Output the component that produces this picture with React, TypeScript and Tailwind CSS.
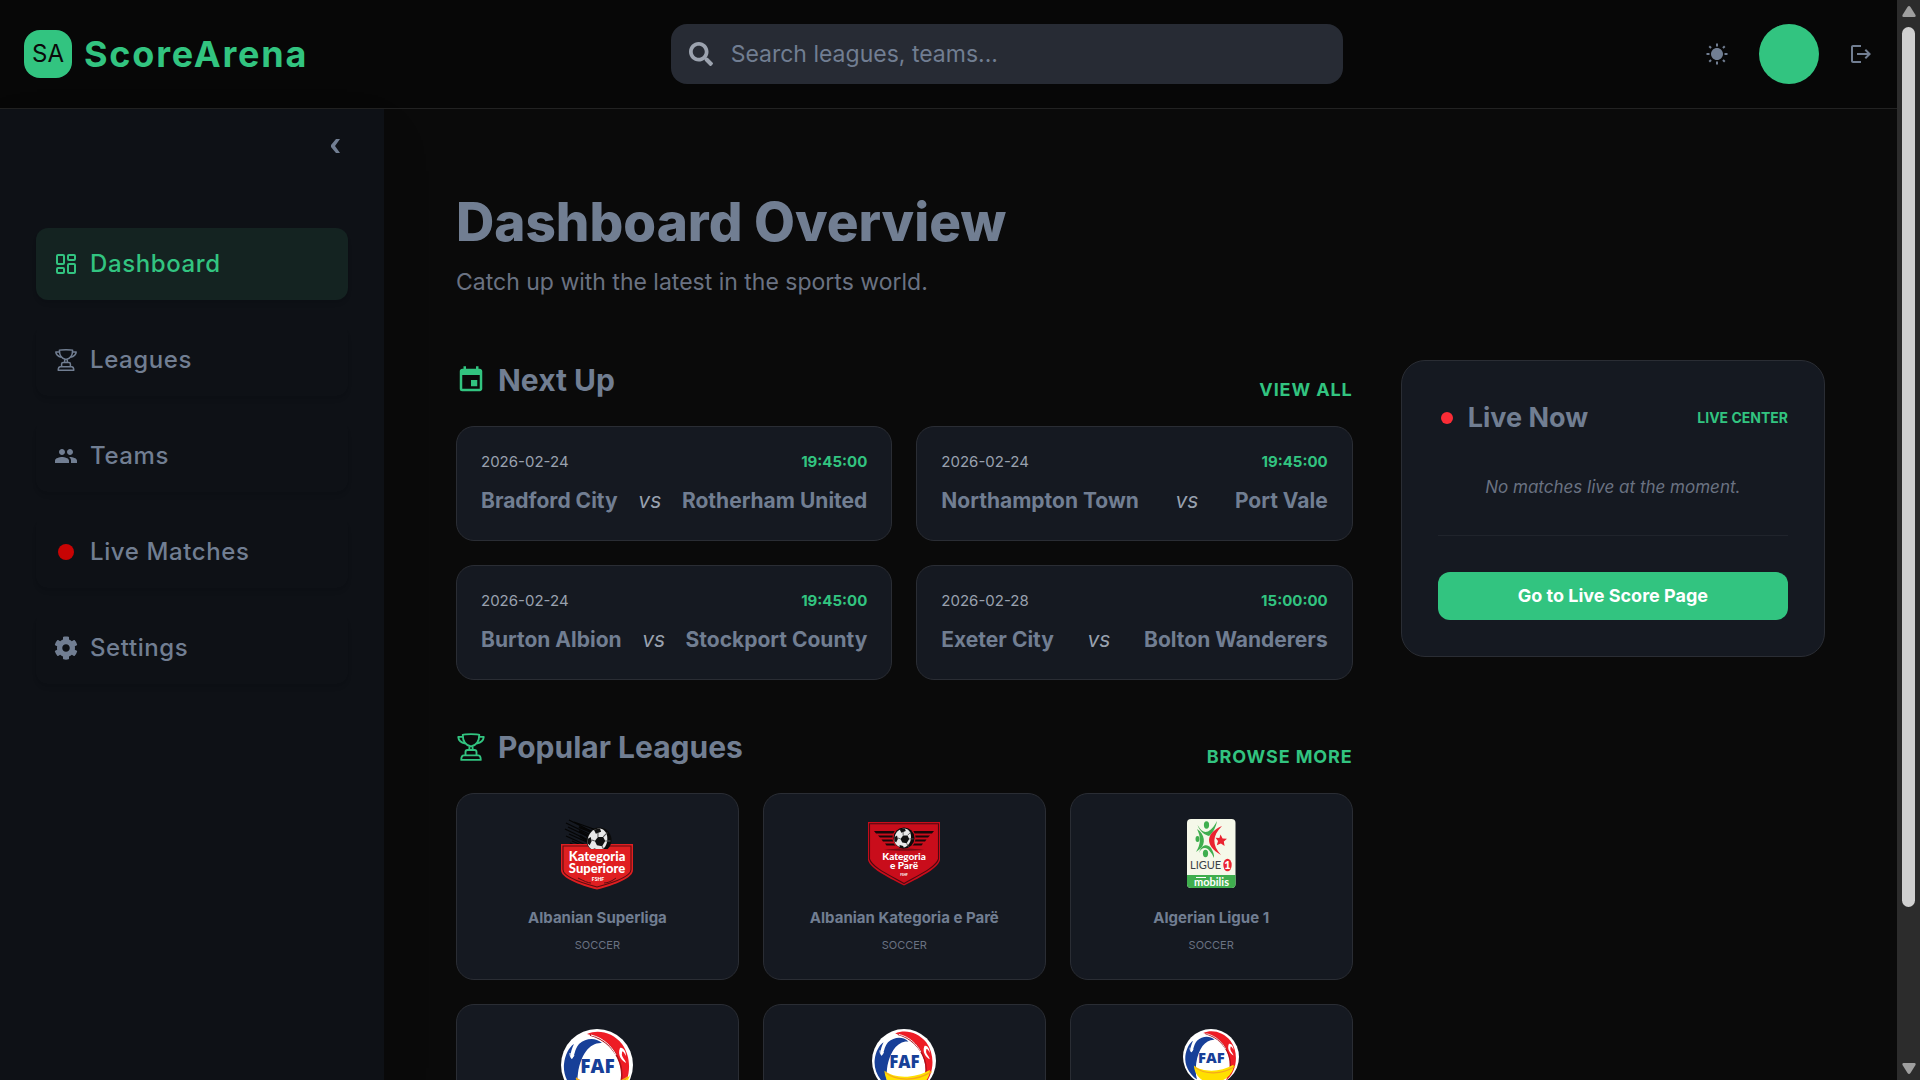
import type { ReactNode } from "react";
import clsx from "clsx";
import { LayoutDashboard } from "lucide-react";
import { FaCog, FaSearch } from "react-icons/fa";
import { IoMdSunny } from "react-icons/io";
import { MdEvent, MdLogout, MdPeople } from "react-icons/md";

const TrophyIcon = ({ className }: { className?: string }) => (
  <svg viewBox="0 0 24 24" fill="none" stroke="currentColor" strokeWidth="1.5" strokeLinejoin="round" className={className}>
    <path d="M5.4 2.2C7 1.5 17 1.5 18.6 2.2C18.6 7 17 10.6 12 11.5C7 10.6 5.4 7 5.4 2.2Z" />
    <path d="M5.4 3.9H1.8C2 7.4 4.6 8.6 7.6 9.3M18.6 3.9H22.2C22 7.4 19.4 8.6 16.4 9.3" />
    <path d="M10.8 11.4L10.6 14.4M13.2 11.4L13.4 14.4" />
    <path d="M7.6 18.4V16C7.6 15 8.4 14.4 9.2 14.4H14.8C15.6 14.4 16.4 15 16.4 16V18.4" />
    <path d="M4.2 22.3C4.2 20 5 18.7 6.4 18.7H17.6C19 18.7 19.8 20 19.8 22.3Z" />
  </svg>
);

const navItems: { label: string; href: string; icon: ReactNode }[] = [
  { label: "Dashboard", href: "#dashboard", icon: <LayoutDashboard className="size-6" /> },
  { label: "Leagues", href: "#leagues", icon: <TrophyIcon className="size-6" /> },
  { label: "Teams", href: "#teams", icon: <MdPeople className="size-6" /> },
  { label: "Live Matches", href: "#live", icon: <span className="m-1 size-4 rounded-full bg-[#c80404]" /> },
  { label: "Settings", href: "#settings", icon: <FaCog className="size-6" /> },
];

const matches = [
  { date: "2026-02-24", time: "19:45:00", home: "Bradford City", away: "Rotherham United" },
  { date: "2026-02-24", time: "19:45:00", home: "Northampton Town", away: "Port Vale" },
  { date: "2026-02-24", time: "19:45:00", home: "Burton Albion", away: "Stockport County" },
  { date: "2026-02-28", time: "15:00:00", home: "Exeter City", away: "Bolton Wanderers" },
];

const Ball = ({ cx, cy, r }: { cx: number; cy: number; r: number }) => (
  <g transform={`translate(${cx} ${cy}) scale(${r / 12})`}>
    <circle r="12" fill="#0b0b0b" />
    <path d="M-11 2C-11-7-5-11 1-11C6-10 8-6 8-1C8 6 3 11-2 11C-7 10-11 7-11 2Z" fill="#e8e8e8" />
    <path d="M-1-3L4-3L6 1L3 6L-2 5L-4 1Z" fill="#111" />
    <path d="M-5-10L1-11L2-8L-3-6ZM-11-1L-8-3L-7 1L-9 5L-11 3ZM-5 8L-1 9L0 12L-5 11Z" fill="#111" />
    <path d="M4-3L8-7M6 1L11 1M3 6L5 10M-4 1L-7 0M-1-3L-1-7" stroke="#555" strokeWidth="1" />
  </g>
);

const SuperioreLogo = () => (
  <svg viewBox="0 0 72 72" className="size-18">
    <g stroke="#050505" strokeWidth="1.3">
      <path d="M8 2L34 15M5 5L32 18M7 9L30 20M4 11L29 23M8 16L28 25M5 18L27 28M11 23L27 30M9 25L24 32M13 4L38 13" />
      <path d="M18 9L38 17M18 13L34 22M19 18L32 27" strokeWidth="2.4" />
    </g>
    <path d="M0 26H72V52C72 60 54 67 36 71.500C18 67 0 60 0 52Z" fill="#e01f21" />
    <path d="M2 28H70V51.500C70 58 53 64.500 36 69C19 64.500 2 58 2 51.500Z" fill="none" stroke="#5d0d10" strokeWidth="1.1" />
    <Ball cx={38} cy={22} r={12.5} />
    <path d="M23 31H53V36H23Z" fill="#e01f21" />
    <g fill="#fff" textAnchor="middle" className="font-['Lato'] font-black">
      <text x="36" y="43" fontSize="13">Kategoria</text>
      <text x="36" y="55" fontSize="13">Superiore</text>
      <text x="37" y="63" fontSize="5">FSHF</text>
    </g>
    <path d="M17 60C23 63 27 65 30 65M43 65C47 65 51 63 55 60" fill="none" stroke="#5d0d10" strokeWidth="1" />
  </svg>
);

const PareLogo = () => (
  <svg viewBox="0 0 72 72" className="size-18">
    <path d="M0 4H72V42C70 50 55 58 36 67.500C17 58 2 50 0 42Z" fill="#c90d1b" />
    <path d="M1.500 5.800H70.500V41C68 49 53 56 36 65.500C19 56 4 49 1.500 41Z" fill="none" stroke="#4d0910" strokeWidth="1.100" />
    <path d="M6 13H66L64 15.500H8ZM10 17.500H62L60 19.500H12ZM13.500 21.500H58.500L57 23.500H15ZM17 25.500H55L53.500 27.500H18.500Z" fill="#170709" />
    <circle cx="36" cy="20" r="11.500" fill="#c90d1b" />
    <path d="M16 32C28 30 44 30 56 32C44 33 28 33 16 32Z" fill="#7c0912" />
    <Ball cx={36} cy={20} r={10.5} />
    <g fill="#fff" textAnchor="middle" className="font-['Lato'] font-black">
      <text x="36" y="42" fontSize="10">Kategoria</text>
      <text x="36" y="51" fontSize="10">e Parë</text>
      <text x="36" y="58" fontSize="3">FSHF</text>
    </g>
  </svg>
);

const LigueLogo = () => (
  <svg viewBox="0 0 72 72" className="size-18">
    <rect x="12" y="1" width="48.500" height="69" rx="4" fill="#f5f8e9" />
    <path d="M12 57H60.500V66A4 4 0 0 1 56.500 70H16A4 4 0 0 1 12 66Z" fill="#3fae4e" />
    <g fill="#3fae4e">
      <ellipse cx="31.500" cy="7" rx="2.600" ry="3.700" />
      <ellipse cx="22.500" cy="21" rx="2" ry="3" />
      <ellipse cx="30.500" cy="35.500" rx="2.600" ry="3.700" />
      <path d="M22.500 7C26 13 29 15 33 13.500C37 11.500 40 7 42 3C41 9 38 15 34 18C30 17 25 14 22.500 7Z" />
      <path d="M22 11C30 16 31 26 25 31C23 32 21 34 21 34C26 26 26 19 22 11Z" />
      <path d="M24 35C26 27 32 25 36 30C38 33 39.500 37 39 40C37 35 33 30 30 30C27 30 25 32 24 35Z" />
    </g>
    <path d="M47 8C31 15 29 27 46 37C37 27 37 18 47 8Z" fill="#ea2330" />
    <path d="M45.500 16.500L47.600 20.400L52 20.700L48.800 23.600L49.600 28L45.900 25.600L41.800 27.200L43 22.900L40.500 19.800L44.400 20Z" fill="#ea2330" />
    <ellipse cx="52.500" cy="47" rx="4.200" ry="6.300" fill="#ea2330" />
    <g className="font-['Lato']">
      <text x="15" y="51" fontSize="11" fill="#3b3f46">LIGUE</text>
      <text x="52.500" y="51" fontSize="11" fontWeight="900" fill="#fff" textAnchor="middle">1</text>
      <text x="36.500" y="67.500" fontSize="11" fontWeight="700" fill="#fff" textAnchor="middle">mobilis</text>
    </g>
    <path d="M21 59.500H31" stroke="#fff" strokeWidth="1" />
  </svg>
);

const FafLogo = ({ className, low = false }: { className: string; low?: boolean }) => (
  <svg viewBox="0 0 72 72" className={className}>
    <circle cx="36" cy="36" r="36" fill="#fff" />
    <path d="M41 14C29 13 20 25 17 44C16 52 16 58 18 65C7 57 2 46 3 35C4 26 8 18 13 15C10 21 8 29 11 30C14 27 13 21 18 15C25 9 34 8 41 14Z" fill="#173f98" />
    <path d="M9 24C9 29 11 31 13 26" fill="none" stroke="#fff" strokeWidth="1" />
    <path d="M26 5C38 0 52 4 61 15C69 26 70 41 65 53C62 60 58 64 55 66C61 55 62 42 57 30C51 17 40 8 26 5Z" fill="#ee1c25" />
    <path d="M29 6C43 10 54 20 59 34C62 43 61 54 57 62" fill="none" stroke="#a9121a" strokeWidth="1.500" />
    <path d="M30 6C43 9 51 18 55 26" fill="none" stroke="#fff" strokeWidth="1" />
    <path d="M59 19C62 18 65 22 65 27C63 23 61 21 61 24C60 28 64 30 65 34C61 32 56 26 59 19Z" fill="#fff" />
    <path
      d={low ? "M14 47C25 56 48 56 65 46C66 56 54 69 38 69C24 69 15 60 14 47Z" : "M15 48C22 62 54 64 69 46C66 58 52 69 38 69C24 69 16 60 15 48Z"}
      fill="#ffe000"
    />
    <path d="M15 49C28 59 50 59 67 48" fill="none" stroke="#f5a81c" strokeWidth="1.500" />
    <circle cx="37" cy="36" r="15" fill="#fff" />
    <text x="36.500" y="44" fontSize="19" textAnchor="middle" fill="#173f98" className="font-['Open_Sans'] font-extrabold">FAF</text>
  </svg>
);

const leagues: { name: string; logo: ReactNode }[] = [
  { name: "Albanian Superliga", logo: <SuperioreLogo /> },
  { name: "Albanian Kategoria e Parë", logo: <PareLogo /> },
  { name: "Algerian Ligue 1", logo: <LigueLogo /> },
  { name: "Andorran 1a Divisió", logo: <FafLogo className="size-18" /> },
  { name: "Andorran 2a Divisió", logo: <FafLogo className="size-16" low /> },
  { name: "Andorra Copa", logo: <FafLogo className="size-14" low /> },
];

const SectionHeader = ({ icon, title, action }: { icon: ReactNode; title: string; action: string }) => (
  <div className="mb-[26px] flex items-end justify-between">
    <h2 className="flex items-center gap-3 text-[30px] leading-10 font-bold">
      <span className="text-[#32c480]">{icon}</span>
      {title}
    </h2>
    <a href="#more" className="text-lg leading-5 font-bold tracking-wider text-[#32c480] uppercase">
      {action}
    </a>
  </div>
);

const Header = () => (
  <header className="flex h-[109px] shrink-0 items-center justify-between border-b border-[#222222] bg-[#070707] px-6">
    <a href="#home" className="flex items-center gap-3">
      <span className="flex size-12 items-center justify-center rounded-2xl bg-[#32c480] text-2xl text-[#0a0a0a]">SA</span>
      <span className="text-4xl font-bold tracking-wider text-[#32c480]">ScoreArena</span>
    </a>
    <label className="flex h-15 w-full max-w-2xl items-center rounded-2xl bg-[#272b34] px-[18px]">
      <FaSearch className="size-6 shrink-0 text-[#9ca3af]" />
      <input
        type="text"
        aria-label="Search"
        placeholder="Search leagues, teams..."
        className="ml-[18px] w-full bg-transparent text-[23px] outline-none placeholder:text-[#717e92]"
      />
    </label>
    <div className="flex items-center gap-[30px]">
      <button aria-label="Toggle theme"><IoMdSunny className="size-6" /></button>
      <button aria-label="Profile" className="size-15 rounded-full bg-[#32c480]" />
      <button aria-label="Log out"><MdLogout className="size-6" /></button>
    </div>
  </header>
);

const Sidebar = () => (
  <aside className="w-96 shrink-0 bg-[#0e1116] px-9 shadow-2xl">
    <div className="flex h-[119px] items-start justify-end pt-[21px]">
      <button aria-label="Collapse sidebar" className="p-2">
        <svg viewBox="0 0 10 16" className="h-4 w-[10px]" fill="currentColor">
          <path d="M6 1H10L5 8L10 15H6L1 9V7Z" />
        </svg>
      </button>
    </div>
    <nav className="flex flex-col gap-6">
      {navItems.map((item, index) => (
        <a
          key={item.label}
          href={item.href}
          className={clsx(
            "flex h-18 items-center gap-3 rounded-xl px-[18px] text-2xl font-medium tracking-wide shadow-md shadow-black/5",
            index === 0 && "bg-[#142321] text-[#32c480]"
          )}
        >
          {item.icon}
          {item.label}
        </a>
      ))}
    </nav>
  </aside>
);

const LiveCard = () => (
  <section className="self-start rounded-3xl border border-[#2a2d34] bg-[#151921] p-9">
    <div className="flex items-center justify-between">
      <h2 className="flex items-center gap-3 text-[27px] leading-[42px] font-bold">
        <span className="mx-[3px] size-3 rounded-full bg-[#fb2c36]" />
        Live Now
      </h2>
      <a href="#live" className="text-sm font-bold text-[#32c480] uppercase">Live Center</a>
    </div>
    <p className="my-9 text-center text-[17px] leading-6 text-[#6a7282] italic">No matches live at the moment.</p>
    <div className="border-t border-[#20242c] pt-9">
      <button className="h-12 w-full rounded-xl bg-[#32c480] text-lg font-bold text-white">Go to Live Score Page</button>
    </div>
  </section>
);

const Scrollbar = () => (
  <div className="flex w-[23px] shrink-0 flex-col items-center bg-[#2c2c2c] py-[6px]" aria-hidden="true">
    <svg viewBox="0 0 14 12" className="w-[14px]" fill="#9f9f9f"><path d="M5.500 1Q7-1 8.500 1L13.500 9Q14 11 12.500 11H1.500Q0 11 .5 9Z" /></svg>
    <div className="mt-[9px] flex-1">
      <div className="h-[85%] w-[13px] rounded-full bg-[#d0d0d0]" />
    </div>
    <svg viewBox="0 0 14 12" className="w-[14px]" fill="#9f9f9f"><path d="M5.500 11Q7 13 8.500 11L13.500 3Q14 1 12.500 1H1.500Q0 1 .5 3Z" /></svg>
  </div>
);

export default function App() {
  return (
    <div className="flex h-screen overflow-hidden bg-[#0a0a0a] font-['Inter',sans-serif] text-[#717e92]">
      <div className="flex min-w-0 flex-1 flex-col">
        <Header />
        <div className="flex min-h-0 flex-1">
          <Sidebar />
          <main className="min-w-0 flex-1 overflow-hidden p-18">
            <h1 className="text-[53px] leading-[82px] font-extrabold">Dashboard Overview</h1>
            <p className="mb-[59px] text-[23px] leading-[38px] text-[#6a7282]">Catch up with the latest in the sports world.</p>

            <div className="grid grid-cols-3 gap-12">
              <div className="col-span-2 flex flex-col gap-[47px]">
                <section>
                  <SectionHeader icon={<MdEvent className="size-[30px]" />} title="Next Up" action="View All" />
                  <div className="grid grid-cols-2 gap-6">
                    {matches.map((match) => (
                      <article key={match.home} className="rounded-[18px] border border-[#2a2d34] bg-[#151921] p-6">
                        <div className="flex items-center justify-between text-[15px] leading-[22px]">
                          <span className="text-[#99a1af]">{match.date}</span>
                          <span className="font-bold text-[#32c480]">{match.time}</span>
                        </div>
                        <div className="mt-3 flex items-center justify-between text-[21px] leading-[31px] font-bold">
                          <span>{match.home}</span>
                          <span className="font-normal text-[#99a1af] italic">vs</span>
                          <span>{match.away}</span>
                        </div>
                      </article>
                    ))}
                  </div>
                </section>

                <section>
                  <SectionHeader icon={<TrophyIcon className="size-[30px]" />} title="Popular Leagues" action="Browse More" />
                  <div className="grid grid-cols-3 gap-6">
                    {leagues.map((league) => (
                      <article key={league.name} className="flex flex-col items-center rounded-[18px] border border-[#2a2d34] bg-[#151921] p-6">
                        {league.logo}
                        <h3 className="mt-4 text-[15px] leading-6 font-bold">{league.name}</h3>
                        <p className="mt-[5px] text-[11px] leading-5 text-[#6a7282] uppercase">Soccer</p>
                      </article>
                    ))}
                  </div>
                </section>
              </div>
              <LiveCard />
            </div>
          </main>
        </div>
      </div>
      <Scrollbar />
    </div>
  );
}
